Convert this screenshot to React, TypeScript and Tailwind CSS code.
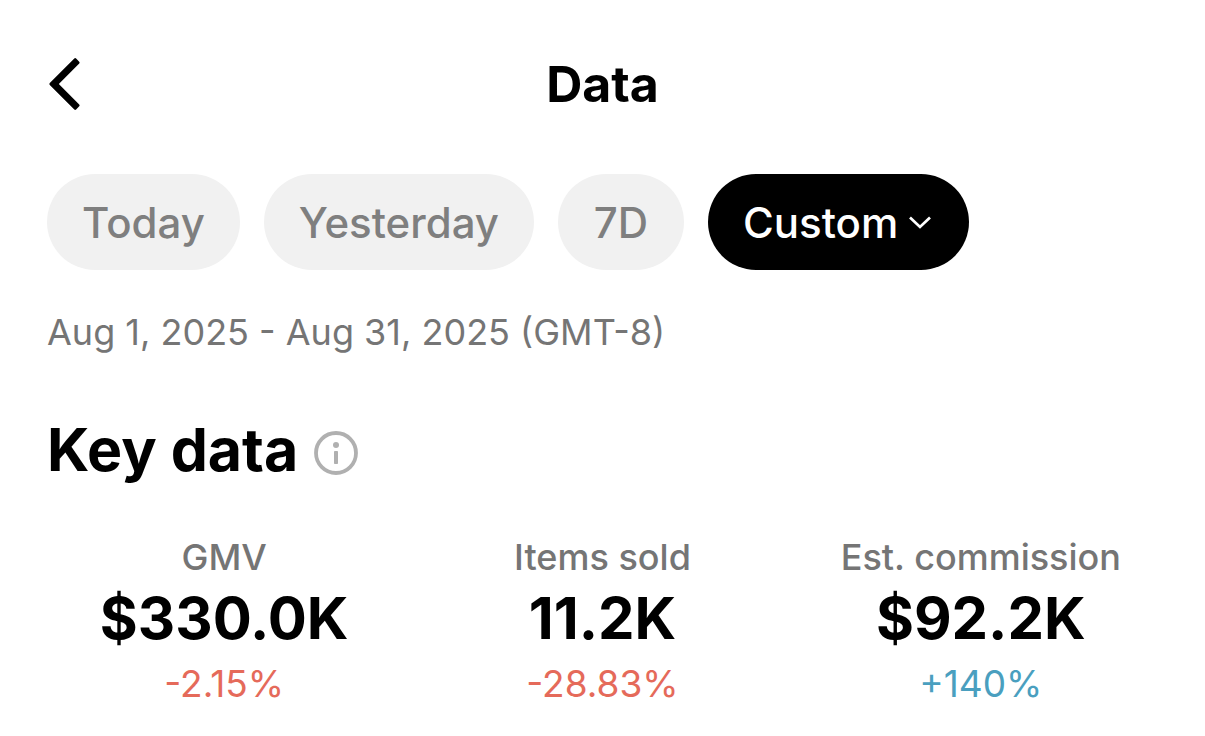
import clsx from "clsx";

const ranges = [
  { id: "today", label: "Today" },
  { id: "yesterday", label: "Yesterday" },
  { id: "7d", label: "7D" },
  { id: "custom", label: "Custom" },
];

const metrics = [
  { label: "GMV", value: "$330.0K", change: "-2.15%" },
  { label: "Items sold", value: "11.2K", change: "-28.83%" },
  { label: "Est. commission", value: "$92.2K", change: "+140%" },
];

function BackIcon() {
  return (
    <svg width="34" height="54" viewBox="0 0 34 54" aria-hidden="true">
      <path
        d="M3.7 27L28.2 2.5L31.3 5.6L9.9 27L31.3 48.4L28.2 51.5Z"
        fill="currentColor"
        stroke="currentColor"
        strokeWidth="2.6"
        strokeLinejoin="round"
      />
    </svg>
  );
}

function ChevronIcon() {
  return (
    <svg width="28" height="16" viewBox="0 0 28 16" fill="none" aria-hidden="true">
      <path d="M4 3.5L14 13L24 3.5" stroke="currentColor" strokeWidth="2.7" />
    </svg>
  );
}

function InfoIcon() {
  return (
    <svg width="44" height="44" viewBox="0 0 44 44" aria-hidden="true">
      <circle cx="22" cy="22" r="20" fill="none" stroke="currentColor" strokeWidth="3.8" />
      <circle cx="22" cy="14" r="3" fill="currentColor" />
      <rect x="20" y="20" width="4" height="13" rx="0.8" fill="currentColor" />
    </svg>
  );
}

export default function App() {
  const selected = "custom";

  return (
    <div className="min-h-screen bg-white px-[47px] pt-12 font-['Inter',sans-serif] text-black">
      <header className="grid h-18 grid-cols-[1fr_auto_1fr] items-center">
        <button type="button" aria-label="Back" className="justify-self-start">
          <BackIcon />
        </button>
        <h1 className="text-[50px] leading-[72px] font-bold">Data</h1>
      </header>

      <nav aria-label="Date range" className="mt-[54px] flex gap-6">
        {ranges.map((range) => (
          <button
            key={range.id}
            type="button"
            aria-pressed={range.id === selected}
            className={clsx(
              "flex h-24 min-w-[126px] items-center justify-center gap-2 rounded-full px-[35px] text-[42px] font-medium",
              range.id === selected ? "bg-black text-white" : "bg-[#f1f1f1] text-[#7f7f7f]",
            )}
          >
            {range.label}
            {range.id === "custom" && <ChevronIcon />}
          </button>
        ))}
      </nav>

      <p className="mt-[38px] text-[36px] leading-[48px] text-[#757575]">
        Aug 1, 2025 - Aug 31, 2025 (GMT-8)
      </p>

      <section>
        <div className="mt-[58px] flex items-center gap-4">
          <h2 className="text-[59px] leading-[72px] font-bold">Key data</h2>
          <button type="button" aria-label="About key data" className="mt-1.5 text-[#b0b0b0]">
            <InfoIcon />
          </button>
        </div>
        <dl className="-mx-3 mt-[47px] grid grid-cols-3 text-center">
          {metrics.map((metric) => (
            <div key={metric.label}>
              <dt className="text-[36px] leading-[48px] font-medium text-[#757575]">{metric.label}</dt>
              <dd className="text-[58px] leading-[74px] font-bold">{metric.value}</dd>
              <dd
                className={clsx(
                  "text-[37px] leading-[58px]",
                  metric.change.startsWith("-") ? "text-[#e56a5a]" : "text-[#4a9fbf]",
                )}
              >
                {metric.change}
              </dd>
            </div>
          ))}
        </dl>
      </section>
    </div>
  );
}
